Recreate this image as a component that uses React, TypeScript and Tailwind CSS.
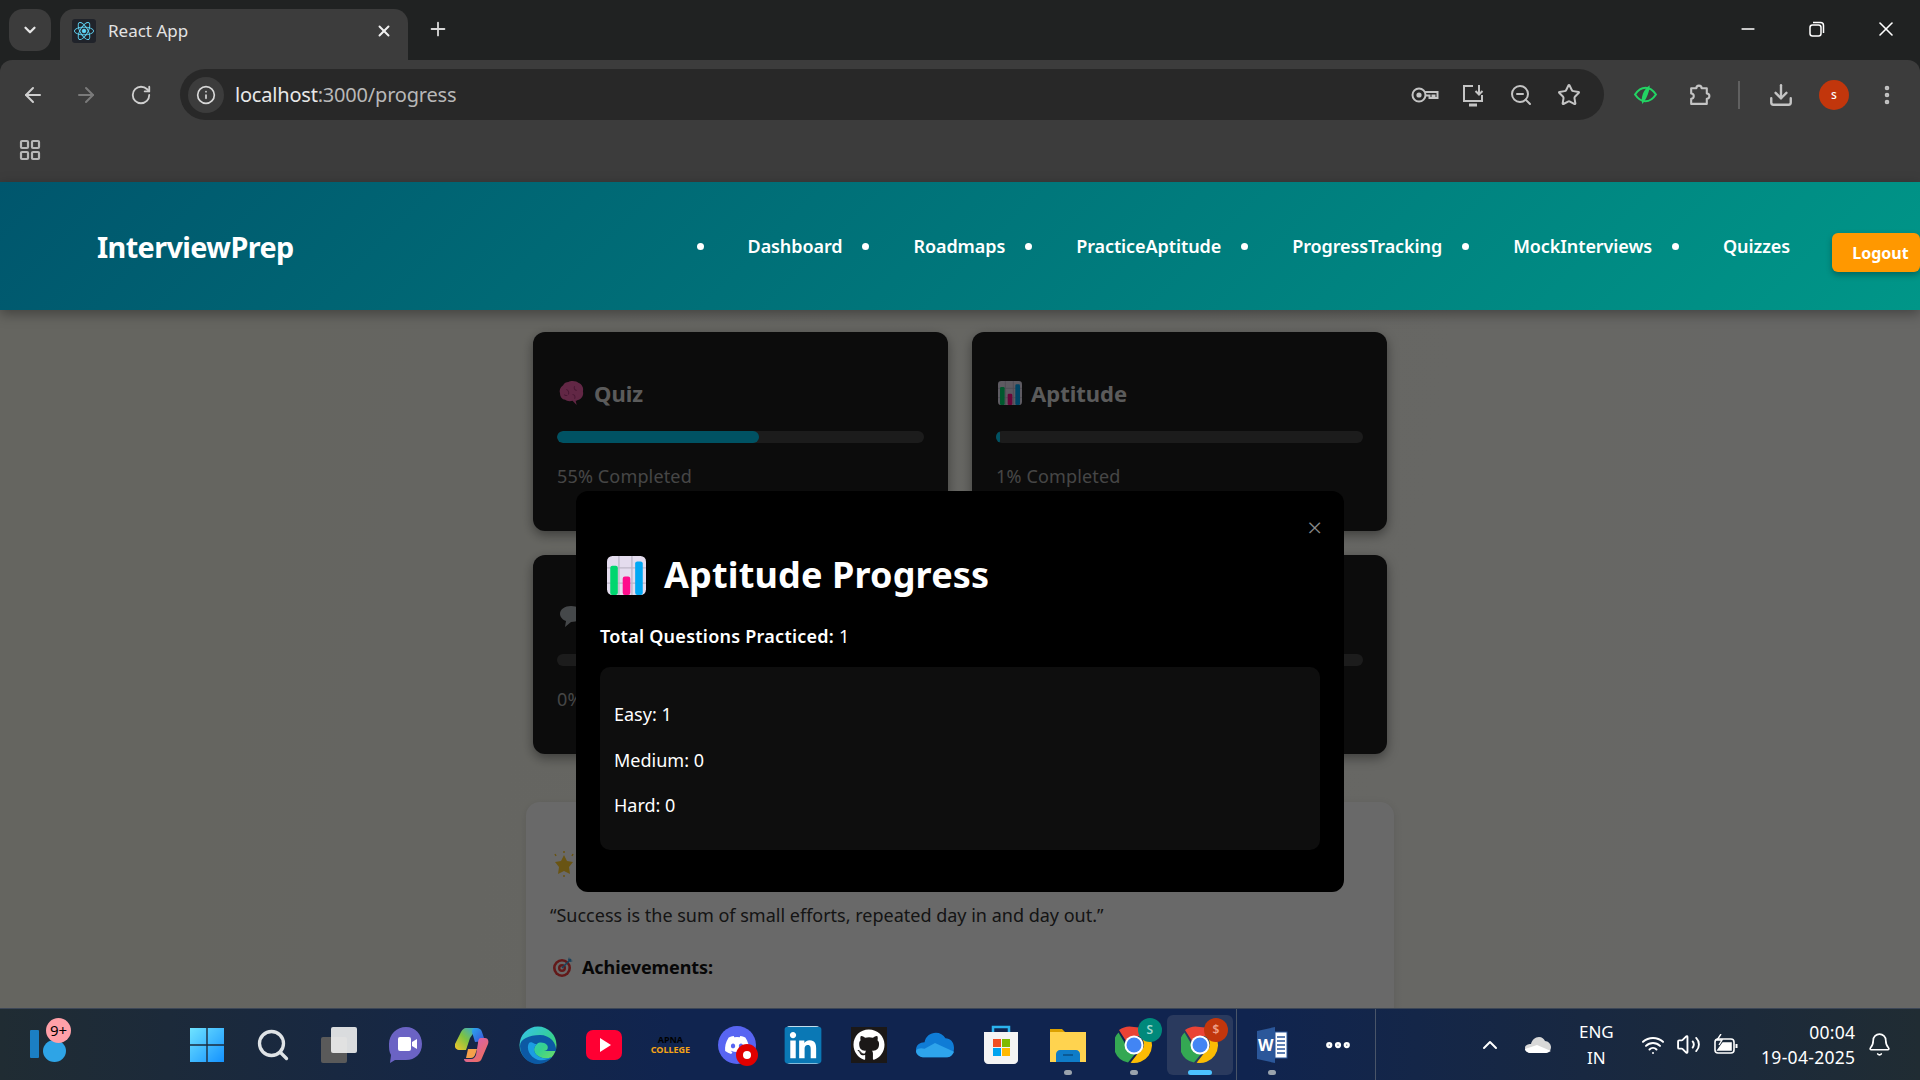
import React from "react";
import {
  ChevronDown, X, Plus, ArrowLeft, ArrowRight, RotateCw, Info, ZoomOut, Star, Download,
  EllipsisVertical, LayoutGrid, Minus, ChevronUp, Wifi, Volume2, Bell, Search, MoreHorizontal,
} from "lucide-react";
import { FaDiscord, FaLinkedin, FaGithub } from "react-icons/fa";

const Chart = ({ size }: { size: number }) => (
  <svg width={size} height={size} viewBox="0 0 36 36" className="shrink-0">
    <rect x="0" y="0" width="36" height="36" rx="5" fill="#e4dcee" />
    <path d="M11 0v36M23 0v36M0 11h36M0 25h36" stroke="#bdb6c8" strokeWidth="1.2" />
    <rect x="3" y="9" width="7" height="27" rx="2" fill="#00d66f" />
    <rect x="14.5" y="19" width="7" height="17" rx="2" fill="#ff0d8c" />
    <rect x="26" y="5" width="7" height="31" rx="2" fill="#00a8f5" />
  </svg>
);

const Brain = () => (
  <svg width="26" height="26" viewBox="0 0 25 25" className="shrink-0">
    <path d="M9 2c3-2 8-1 10 1 3 1 5 5 4 8 1 3-1 7-4 8-1 0-2 1-3 1l1 4-4-4c-3 1-6 0-7-1-3 0-5-3-5-6-1-3 0-6 3-8 1-2 3-3 5-3z" fill="#ee5fa8" />
    <path d="M7 9c2 1 3 3 2 5M15 6c-1 2 0 4 2 4M13 14c2 0 3 2 2 4M5 14c1 1 2 1 3 1" stroke="#b03a7c" strokeWidth="1" fill="none" />
  </svg>
);

const Bubble = () => (
  <svg width="25" height="25" viewBox="0 0 25 25" className="shrink-0">
    <path d="M12 2c6 0 11 3 11 8s-5 8-11 8l-6 5 1-6c-3-1-6-4-6-7 0-5 5-8 11-8z" fill="#a9aeb4" />
  </svg>
);

const GoldStar = () => (
  <svg width="24" height="26" viewBox="0 0 24 26" className="shrink-0">
    <path d="M12 4l3 6 6 1-4 5 1 7-6-3-6 3 1-7-4-5 6-1z" fill="#ffcc2e" />
    <path d="M12 0v2M12 24v2M3 3l1 2M21 3l-1 2" stroke="#ffcc2e" strokeWidth="1.5" />
  </svg>
);

const Target = () => (
  <svg width="22" height="22" viewBox="0 0 22 22" className="shrink-0">
    <circle cx="10" cy="12" r="9" fill="#ef3d3d" />
    <circle cx="10" cy="12" r="6.4" fill="#fff" />
    <circle cx="10" cy="12" r="4" fill="#ef3d3d" />
    <circle cx="10" cy="12" r="1.6" fill="#fff" />
    <path d="M10 12L19 3" stroke="#3f9fdc" strokeWidth="1.6" />
    <path d="M17 1l1 3 3 1-3 1-2-2z" fill="#3f9fdc" />
  </svg>
);

const Card = ({ icon, title, pct }: { icon: React.ReactNode; title: string; pct: number }) => (
  <div className="h-[199px] rounded-[12px] bg-[#1e1e1e] px-6 pt-[47px] shadow-[0_4px_12px_rgba(0,0,0,0.4)]">
    <div className="flex h-7 items-center gap-[9px] pl-[2px] text-[22px] font-bold text-[#dddddd]">
      {icon}
      <span>{title}</span>
    </div>
    <div className="mt-[24px] h-3 overflow-hidden rounded-full bg-[#444444]">
      <div className="h-full rounded-full bg-[#00c8f0]" style={{ width: `${pct}%` }} />
    </div>
    <p className="mt-[21px] text-[18px] leading-6 tracking-[0.15px] text-[#aaaaaa]">{pct}% Completed</p>
  </div>
);

const links = ["Dashboard", "Roadmaps", "PracticeAptitude", "ProgressTracking", "MockInterviews", "Quizzes"];

const Tb = ({ children, className = "" }: { children: React.ReactNode; className?: string }) => (
  <div className={`flex h-[60px] w-[66.2px] shrink-0 items-center justify-center ${className}`}>{children}</div>
);

const Dot = () => <span className="absolute bottom-0 h-[5px] w-[8px] rounded-full bg-[#9aa3ad]" />;

const Windows = () => (
  <svg width="36" height="36" viewBox="0 0 36 36">
    <defs>
      <linearGradient id="wg" x1="0" y1="0" x2="1" y2="1">
        <stop offset="0" stopColor="#6fe3ff" />
        <stop offset="1" stopColor="#1492ff" />
      </linearGradient>
    </defs>
    <path d="M1 1h16.3v16.3H1zM18.7 1H35v16.3H18.7zM1 18.7h16.3V35H1zM18.7 18.7H35V35H18.7z" fill="url(#wg)" />
  </svg>
);

const Meet = () => (
  <svg width="36" height="38" viewBox="0 0 36 38">
    <path d="M18 1c9 0 16 7 16 17s-7 16-16 16H7l-5 3 1-8C1 26 1 22 1 18 1 8 9 1 18 1z" fill="#6b63c4" />
    <rect x="10" y="11" width="13" height="14" rx="2" fill="#fff" />
    <path d="M24 16l5-3v10l-5-3z" fill="#fff" />
  </svg>
);

const Copilot = () => (
  <svg width="34" height="36" viewBox="0 0 34 36">
    <defs>
      <linearGradient id="c1" x1="0" y1="0" x2="1" y2="1">
        <stop offset="0" stopColor="#2aa6f0" />
        <stop offset="1" stopColor="#3c4fd8" />
      </linearGradient>
      <linearGradient id="c2" x1="0" y1="1" x2="1" y2="0">
        <stop offset="0" stopColor="#f7c52b" />
        <stop offset="0.5" stopColor="#7dc242" />
        <stop offset="1" stopColor="#2ba8e8" />
      </linearGradient>
      <linearGradient id="c3" x1="0" y1="0" x2="1" y2="1">
        <stop offset="0" stopColor="#c95ed0" />
        <stop offset="1" stopColor="#f6704a" />
      </linearGradient>
    </defs>
    <path d="M11 1h11l-7 10-4 12H4c-3 0-5-3-4-6L6 5c1-2 3-4 5-4z" fill="url(#c2)" />
    <path d="M20 1h2c2 0 4 1 5 4l3 9-10 1-3-10c0-2 1-4 3-4z" fill="url(#c1)" />
    <path d="M26 11h4c3 0 4 3 3 6l-6 14c-1 3-3 4-5 4H12c-2 0-3-2-3-3h7c3 0 4-2 5-4l2-12c0-3 1-5 3-5z" fill="url(#c3)" />
    <path d="M13 22h9l-2 6c-1 2-2 3-4 3h-5z" fill="#f6a04a" />
  </svg>
);

const Edge = () => (
  <svg width="38" height="38" viewBox="0 0 38 38">
    <defs>
      <linearGradient id="e1" x1="0" y1="0" x2="1" y2="1">
        <stop offset="0" stopColor="#35c1f1" />
        <stop offset="0.6" stopColor="#35d18f" />
        <stop offset="1" stopColor="#7fe05a" />
      </linearGradient>
    </defs>
    <circle cx="19" cy="19" r="18.5" fill="url(#e1)" />
    <path d="M1 20c0 10 8 18 18 18 6 0 11-3 14-7-4 2-10 2-14-1-5-3-5-9-1-12 2-2 7-2 10 1 2 3 0 6-3 6h12c1-8-6-16-16-16C10 9 1 13 1 20z" fill="#0c59a4" />
    <path d="M10 17c-3 5 0 14 9 17 6 1 11-1 14-3-4 2-10 2-14-1-5-3-5-9-1-12l-2 0c-3-2-5-2-6-1z" fill="#1b9de2" />
  </svg>
);

const Youtube = () => (
  <svg width="36" height="34" viewBox="0 0 36 34">
    <rect x="0" y="2" width="36" height="30" rx="7" fill="#ff0033" />
    <path d="M14 10l11 7-11 7z" fill="#fff" />
  </svg>
);

const Cloud = () => (
  <svg width="38" height="28" viewBox="0 0 40 28">
    <path d="M9 11c1-6 6-10 12-10 4 0 8 2 10 6 5 0 9 4 9 10s-3 10-8 10H9c-5 0-9-3-9-8s4-8 9-8z" fill="#0f7cd6" />
    <path d="M0 20c0 4 4 7 9 7h23c4 0 7-3 8-6L20 12 9 18c-3-1-7-1-9 2z" fill="#2ea4ec" />
  </svg>
);

const Store = () => (
  <svg width="36" height="40" viewBox="0 0 36 40">
    <path d="M10 7V2h16v5" fill="none" stroke="#2bb3ee" strokeWidth="2.5" />
    <path d="M1 7h34v28c0 2-2 4-4 4H5c-2 0-4-2-4-4z" fill="#f4f4f4" />
    <rect x="10" y="14" width="8" height="8" fill="#f25022" />
    <rect x="19" y="14" width="8" height="8" fill="#7fba00" />
    <rect x="10" y="23" width="8" height="8" fill="#00a4ef" />
    <rect x="19" y="23" width="8" height="8" fill="#ffb900" />
  </svg>
);

const Folder = () => (
  <svg width="38" height="36" viewBox="0 0 38 36">
    <path d="M1 2h12l4 4h20v6H1z" fill="#dca100" />
    <path d="M1 5h36v30H1z" fill="#ffd34f" />
    <path d="M7 35V27c0-2 2-4 4-4h16c2 0 4 2 4 4v8z" fill="#0f7cc8" />
    <path d="M14 28h10" stroke="#0a5a95" strokeWidth="2" />
  </svg>
);

const Chrome = ({ badge, badgeColor }: { badge: string; badgeColor: string }) => (
  <div className="relative h-[38px] w-[38px]">
    <svg width="38" height="38" viewBox="0 0 38 38">
      <path d="M19 1a18 18 0 0 1 15.600 9H19a9 9 0 0 0-8 5L4 4a18 18 0 0 1 15-3z" fill="#ea4335" />
      <path d="M3.500 6.500l8 13.500a9 9 0 0 0 9 7.500L13 36.500A18 18 0 0 1 3.500 6.500z" fill="#34a853" />
      <path d="M34.600 10a18 18 0 0 1-19 26.700L24 26a9 9 0 0 0 0-16z" fill="#fbbc04" />
      <circle cx="19" cy="19" r="9.500" fill="#fff" />
      <circle cx="19" cy="19" r="7.500" fill="#4285f4" />
    </svg>
    <span
      className={`absolute -right-[9px] -top-[8px] flex h-[24px] w-[24px] items-center justify-center rounded-full text-[12px] font-semibold ${badgeColor}`}
    >
      {badge}
    </span>
  </div>
);

const Word = () => (
  <div className="relative h-[36px] w-[32px]">
    <svg width="32" height="36" viewBox="0 0 32 36">
      <path d="M1 4l18-4v36L1 32z" fill="#2b579a" />
      <rect x="19" y="5" width="12" height="26" fill="#fff" stroke="#2b579a" />
      <path d="M21 10h8M21 14h8M21 18h8M21 22h8M21 26h8" stroke="#2b579a" strokeWidth="1.6" />
    </svg>
    <span className="absolute left-[2px] top-[6px] text-[16px] font-bold leading-6 text-white">W</span>
  </div>
);

export default function App() {
  return (
    <div className="flex h-[1080px] w-[1920px] flex-col overflow-hidden bg-[#202222] font-['Noto_Sans',sans-serif]">
      {/* tab strip */}
      <div className="flex h-[60px] shrink-0 items-start pl-[9px] pt-[9px]">
        <div className="flex h-[42px] w-[42px] items-center justify-center rounded-[14px] bg-[#3c3c3c] text-[#e6e6e6]">
          <ChevronDown size={18} strokeWidth={3} />
        </div>
        <div className="ml-[9px] flex h-[51px] w-[348px] items-center rounded-t-[14px] bg-[#3c3c3c] pb-[7px] pl-3 pr-[15px]">
          <div className="flex h-6 w-6 items-center justify-center rounded-[3px] bg-[#20232a]">
            <svg width="22" height="22" viewBox="-12 -12 24 24" fill="none" stroke="#61dafb" strokeWidth="1">
              <ellipse rx="10.500" ry="4.200" />
              <ellipse rx="10.500" ry="4.200" transform="rotate(60)" />
              <ellipse rx="10.500" ry="4.200" transform="rotate(120)" />
              <circle r="2" fill="#61dafb" />
            </svg>
          </div>
          <span className="ml-3 text-[17px] text-[#e3e3e3]">React App</span>
          <X size={18} strokeWidth={2.6} className="ml-auto text-[#f0f0f0]" />
        </div>
        <Plus size={22} strokeWidth={2} className="ml-[19px] mt-[9px] text-[#d8d8d8]" />
        <div className="ml-auto flex h-[40px] items-center text-white">
          <div className="flex w-[69px] justify-center"><Minus size={20} strokeWidth={2} /></div>
          <div className="flex w-[69px] justify-center">
            <svg width="16" height="16" viewBox="0 0 16 16" fill="none" stroke="#fff" strokeWidth="1.5">
              <rect x="1" y="4" width="11" height="11" rx="2.5" />
              <path d="M4 1.500h7.500c2 0 3 1 3 3V12" />
            </svg>
          </div>
          <div className="flex w-[69px] justify-center"><X size={24} strokeWidth={1.6} /></div>
        </div>
      </div>

      {/* toolbar */}
      <div className="flex h-[62px] shrink-0 items-center rounded-t-[12px] bg-[#3c3c3c] pl-[21px] pt-[7px]">
        <ArrowLeft size={24} strokeWidth={2} className="text-[#cfcfcf]" />
        <ArrowRight size={24} strokeWidth={2} className="ml-[29px] text-[#7a7a7a]" />
        <RotateCw size={22} strokeWidth={2} className="ml-[32px] text-[#cfcfcf]" />
        <div className="ml-[28px] flex h-[51px] w-[1424px] items-center rounded-full bg-[#282828] pl-[8px]">
          <div className="flex h-9 w-9 items-center justify-center rounded-full bg-[#3c3c3c]">
            <Info size={20} className="text-[#d8d8d8]" />
          </div>
          <span className="ml-[11px] text-[20px] tracking-[-0.2px] text-[#e8e8e8]">
            localhost<span className="text-[#b8b8b8]">:3000/progress</span>
          </span>
          <div className="ml-auto flex items-center gap-[24px] pr-[23px] text-[#c4c4c4]">
            <svg width="28" height="24" viewBox="0 0 28 24" fill="none" stroke="currentColor" strokeWidth="2" className="-mx-[2px]">
              <circle cx="8" cy="12" r="6.500" />
              <circle cx="8" cy="12" r="2.600" fill="currentColor" stroke="none" />
              <path d="M14 9h12.500v6h-3v-2.500h-2V15h-3v-2.500H15" />
            </svg>
            <svg width="24" height="24" viewBox="0 0 24 24" fill="none" stroke="currentColor" strokeWidth="2">
              <path d="M12 3H3v15h18v-6" />
              <path d="M18 2v9M14.500 8l3.500 3.500L21.500 8" />
              <path d="M8 22h8" strokeWidth="3" />
            </svg>
            <ZoomOut size={24} strokeWidth={2} />
            <Star size={24} strokeWidth={2} />
          </div>
        </div>
        <svg width="25" height="25" viewBox="0 0 24 24" fill="none" stroke="#22d463" strokeWidth="2" className="ml-[29px]">
          <path d="M2 12c3-4.500 6-6.500 10-6.500s7 2 10 6.500c-3 4.500-6 6.500-10 6.500S5 16.500 2 12z" />
          <path d="M16 3c0 6-3 13-7 18-2-6 1-14 7-18z" fill="#22d463" stroke="none" />
        </svg>
        <svg width="25" height="25" viewBox="0 0 24 24" fill="none" stroke="#c4c4c4" strokeWidth="2" strokeLinejoin="round" className="ml-[29px]">
          <path d="M4 6h5a2.500 2.500 0 0 1 5 0h5v5a2.500 2.500 0 0 1 0 5v5H4v-5a2.500 2.500 0 0 0 0-5z" />
        </svg>
        <div className="ml-[26px] h-[28px] w-[2px] bg-[#606060]" />
        <Download size={26} strokeWidth={2.2} className="ml-[28px] text-[#c4c4c4]" />
        <div className="ml-[25px] flex h-[30px] w-[30px] items-center justify-center rounded-full bg-[#c2360c] text-[12px] font-medium text-white">
          s
        </div>
        <EllipsisVertical size={24} strokeWidth={2.6} className="ml-[26px] text-[#c4c4c4]" />
      </div>

      {/* bookmarks */}
      <div className="flex h-[60px] shrink-0 items-center bg-[#3c3c3c] pb-[4px] pl-[18px]">
        <LayoutGrid size={24} strokeWidth={2.2} className="text-[#b8b8b8]" />
      </div>

      {/* navbar */}
      <nav className="relative z-10 flex h-[128px] shrink-0 items-center bg-[linear-gradient(135deg,#00566d,#009688)] pl-[97px] shadow-[0_4px_12px_rgba(0,0,0,0.35)]">
        <span className="pt-[2px] text-[28.8px] font-bold tracking-[-0.6px] text-white">InterviewPrep</span>
        <ul className="ml-auto flex items-center pt-[1px]">
          {links.map((l) => (
            <li key={l} className="flex items-center text-[18px] font-semibold tracking-[-0.09px] text-white">
              <span className="h-[7px] w-[7px] rounded-full bg-white" />
              <span className="ml-[44px] mr-[20px]">{l}</span>
            </li>
          ))}
        </ul>
        <button className="mt-[13px] ml-[22px] h-[39px] w-[88px] rounded-[6px] bg-[#ff9800] pl-[9px] text-[16px] font-bold text-white shadow-[0_3px_6px_rgba(0,0,0,0.3)]">
          Logout
        </button>
      </nav>

      {/* page */}
      <main className="relative flex-1 overflow-hidden bg-[linear-gradient(100deg,#f4f4e8,#fbfbf6)] pt-[22px]">
        <div className="mx-auto grid w-[854px] grid-cols-2 gap-6">
          <Card icon={<Brain />} title="Quiz" pct={55} />
          <Card icon={<Chart size={24} />} title="Aptitude" pct={1} />
          <Card icon={<Bubble />} title="Interview" pct={0} />
          <Card icon={<Bubble />} title="Coding" pct={0} />
        </div>
        <section className="mx-auto mt-[48px] h-[300px] w-[868px] rounded-[14px] bg-white px-6 pt-[50px] shadow-[0_2px_8px_rgba(0,0,0,0.1)]">
          <div className="flex h-6 items-center gap-2 pl-[2px] text-[20px] font-bold text-[#222222]">
            <GoldStar />
            <span>Motivation</span>
          </div>
          <p className="mt-[27px] text-[18px] leading-6 text-[#333333]">
            “Success is the sum of small efforts, repeated day in and day out.”
          </p>
          <div className="mt-[28px] flex h-6 items-center gap-[8px] pl-[2px] text-[18px] font-bold tracking-[-0.1px] text-[#111111]">
            <Target />
            <span>Achievements:</span>
          </div>
        </section>

        {/* modal overlay */}
        <div className="absolute inset-0 flex justify-center bg-[#00000096] pt-[181px]">
          <div className="relative h-[401px] w-[768px] rounded-[12px] bg-black px-6 pt-[60px] text-white">
            <button className="absolute right-[22px] top-[20px] text-[26px] font-light leading-8 text-[#888888]">×</button>
            <h2 className="flex h-12 items-center gap-[18px] pl-[7px] text-[36px] font-bold tracking-[0.15px]">
              <Chart size={39} />
              <span>Aptitude Progress</span>
            </h2>
            <p className="mt-[25px] text-[18px] leading-6 tracking-[0.25px]">
              <b className="font-semibold">Total Questions Practiced:</b> 1
            </p>
            <div className="mt-[19px] h-[183px] rounded-[10px] bg-[#0e0e0e] px-[14px] pt-[24px] text-[18px] leading-[46px]">
              <div className="h-[46px]">Easy: 1</div>
              <div className="h-[45px]">Medium: 0</div>
              <div className="h-[45px]">Hard: 0</div>
            </div>
          </div>
        </div>
      </main>

      {/* taskbar */}
      <footer className="flex h-[72px] shrink-0 items-center border-t border-[#3c4656] bg-[linear-gradient(90deg,#202c33,#10244f_35%,#10244f_65%,#202c33)]">
        <div className="relative h-full w-[174px] shrink-0">
          <div className="absolute left-[30px] top-[21px] h-[28px] w-[9px] rounded-[1px] bg-[#1b7fc4]" />
          <div className="absolute left-[43px] top-[31px] h-[22px] w-[23px] rounded-[50%] bg-[#2ea4e6]" />
          <div className="absolute left-[46px] top-[9px] flex h-[25px] w-[25px] items-center justify-center rounded-full bg-[#ffa0a8] text-[15px] text-black">
            9+
          </div>
        </div>
        <Tb><Windows /></Tb>
        <Tb><Search size={36} strokeWidth={2.2} className="text-[#dfe3e6]" /></Tb>
        <Tb>
          <div className="relative h-[36px] w-[36px]">
            <div className="absolute bottom-0 left-0 h-[26px] w-[26px] rounded-[2px] bg-[#5a5a5a]" />
            <div className="absolute right-0 top-0 h-[26px] w-[26px] rounded-[2px] bg-[#f0f0f0]/90" />
          </div>
        </Tb>
        <Tb><Meet /></Tb>
        <Tb><Copilot /></Tb>
        <Tb><Edge /></Tb>
        <Tb><Youtube /></Tb>
        <Tb>
          <div className="flex flex-col items-center text-[9px] font-bold leading-[10px]">
            <span className="text-black">APNA</span>
            <span className="text-[#f4a316]">COLLEGE</span>
          </div>
        </Tb>
        <Tb>
          <div className="relative flex h-[38px] w-[38px] items-center justify-center rounded-full bg-[#5865f2]">
            <FaDiscord size={26} className="text-white" />
            <span className="absolute -bottom-[2px] -right-[2px] flex h-[22px] w-[22px] items-center justify-center rounded-full bg-[#e00000]">
              <span className="h-[8px] w-[8px] rounded-full bg-white" />
            </span>
          </div>
        </Tb>
        <Tb>
          <div className="relative h-[38px] w-[36px] rounded-[5px] bg-white">
            <FaLinkedin size={42} className="absolute -left-[3px] -top-[2px] text-[#0a78b5]" />
          </div>
        </Tb>
        <Tb>
          <div className="flex h-[36px] w-[36px] items-center justify-center bg-[#1b1817]">
            <FaGithub size={32} className="text-white" />
          </div>
        </Tb>
        <Tb><Cloud /></Tb>
        <Tb><Store /></Tb>
        <Tb className="relative"><Folder /><Dot /></Tb>
        <Tb className="relative"><Chrome badge="S" badgeColor="bg-[#00897b] text-[#9fd8cf]" /><Dot /></Tb>
        <Tb className="relative rounded-[6px] bg-[#2a3a5e]">
          <Chrome badge="$" badgeColor="bg-[#c2360c] text-[#eea08a]" />
          <span className="absolute bottom-0 h-[5px] w-[24px] rounded-full bg-[#4cc2ff]" />
        </Tb>
        <div className="ml-[3px] h-full w-px shrink-0 bg-[#4a5568]" />
        <Tb className="relative ml-[2px]"><Word /><Dot /></Tb>
        <Tb><MoreHorizontal size={30} strokeWidth={3} className="text-white" /></Tb>
        <div className="ml-[4px] h-full w-px shrink-0 bg-[#4a5568]" />
        <div className="flex flex-1 items-center text-white">
          <ChevronUp size={24} strokeWidth={2} className="ml-[102px]" />
          <svg width="26" height="18" viewBox="0 0 26 18" className="ml-[23px]">
            <path d="M6 8c1-4 4-7 8-7 3 0 5 2 6 4 3 0 6 3 6 6s-2 6-5 6H6c-3 0-6-2-6-5s3-4 6-4z" fill="#d8d8d8" />
            <path d="M0 13l12-4 14 6-5 2H6c-3 0-6-2-6-4z" fill="#fff" />
          </svg>
          <div className="ml-[27px] flex w-[36px] flex-col items-center text-[17px] leading-[26px]">
            <span>ENG</span>
            <span>IN</span>
          </div>
          <Wifi size={24} strokeWidth={2} className="ml-[27px]" />
          <Volume2 size={25} strokeWidth={1.8} className="ml-[11px]" />
          <svg width="24" height="22" viewBox="0 0 24 22" fill="none" stroke="#fff" strokeWidth="1.6" className="ml-[13px]">
            <rect x="1" y="5" width="19" height="14" rx="3" />
            <path d="M22.500 10v4" strokeWidth="2" />
            <path d="M4 16l5-7h8v7z" fill="#fff" />
            <path d="M7 0L3 6h5l-3 5" strokeWidth="1.4" />
          </svg>
          <div className="ml-[19px] flex w-[98px] flex-col items-end text-[17.5px] leading-[25px] tracking-[0.3px]">
            <span>00:04</span>
            <span>19-04-2025</span>
          </div>
          <Bell size={25} strokeWidth={1.6} className="ml-[12px]" />
        </div>
      </footer>
    </div>
  );
}
